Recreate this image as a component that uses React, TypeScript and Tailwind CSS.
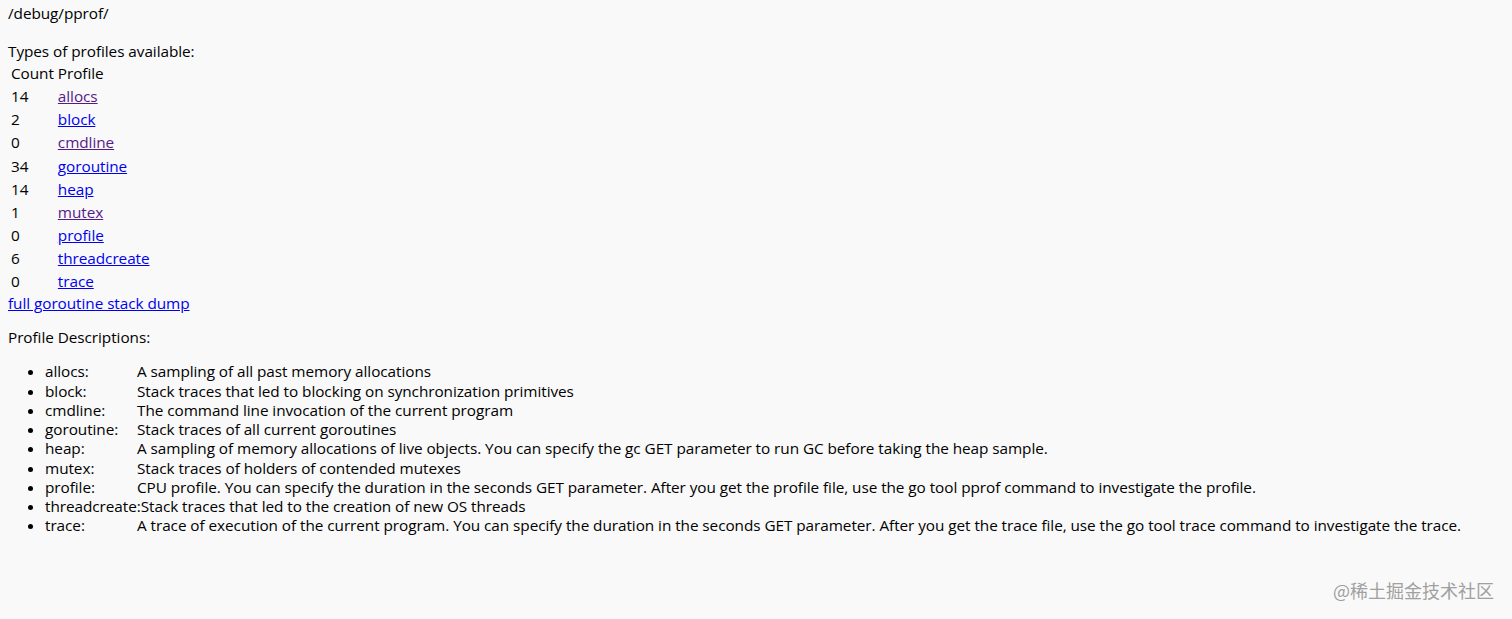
import React from "react";

const profiles: [string, string, boolean][] = [
  ["14", "allocs", true],
  ["2", "block", false],
  ["0", "cmdline", true],
  ["34", "goroutine", false],
  ["14", "heap", false],
  ["1", "mutex", true],
  ["0", "profile", false],
  ["6", "threadcreate", false],
  ["0", "trace", false],
];

const descs: [string, string][] = [
  ["allocs:", "A sampling of all past memory allocations"],
  ["block:", "Stack traces that led to blocking on synchronization primitives"],
  ["cmdline:", "The command line invocation of the current program"],
  ["goroutine:", "Stack traces of all current goroutines"],
  ["heap:", "A sampling of memory allocations of live objects. You can specify the gc GET parameter to run GC before taking the heap sample."],
  ["mutex:", "Stack traces of holders of contended mutexes"],
  ["profile:", "CPU profile. You can specify the duration in the seconds GET parameter. After you get the profile file, use the go tool pprof command to investigate the profile."],
  ["threadcreate:", "Stack traces that led to the creation of new OS threads"],
  ["trace:", "A trace of execution of the current program. You can specify the duration in the seconds GET parameter. After you get the trace file, use the go tool trace command to investigate the trace."],
];

export default function App() {
  return (
    <div
      className="relative min-h-[619px] bg-[#f9f9f9] text-[#000] text-[15.33px] leading-[19px] tracking-[-0.06px] px-[8px] pt-[4px] overflow-hidden"
      style={{ fontFamily: '"Open Sans", "Noto Sans", sans-serif' }}
    >
      <div>/debug/pprof/</div>
      <div className="h-[19px]" />
      <div>Types of profiles available:</div>
      <table className="border-separate border-spacing-[2px] leading-[19.125px]">
        <thead>
          <tr>
            <td className="p-[1px]">Count</td>
            <td className="p-[1px]">Profile</td>
          </tr>
        </thead>
        <tbody>
          {profiles.map(([c, n, v]) => (
            <tr key={n}>
              <td className="p-[1px]">{c}</td>
              <td className="p-[1px]">
                <a
                  href="#"
                  className={v ? "text-[#551a8b] underline" : "text-[#0000ee] underline"}
                >
                  {n}
                </a>
              </td>
            </tr>
          ))}
        </tbody>
      </table>
      <a href="#" className="text-[#0000ee] underline block">
        full goroutine stack dump
      </a>
      <div className="mt-[15px]">Profile Descriptions:</div>
      <ul className="mt-[15px] pl-[37px] list-disc">
        {descs.map(([n, d]) => (
          <li key={n} className="leading-[19.25px] whitespace-nowrap">
            <span className="inline-block min-w-[92px]">{n}</span>
            {d}
          </li>
        ))}
      </ul>
      <div
        className="absolute right-[18px] top-[578px] text-[18px] leading-[25px] tracking-normal text-[#a0a0a0]"
        style={{ fontFamily: '"Noto Sans CJK SC", "Noto Sans", sans-serif' }}
      >
        @稀土掘金技术社区
      </div>
    </div>
  );
}
